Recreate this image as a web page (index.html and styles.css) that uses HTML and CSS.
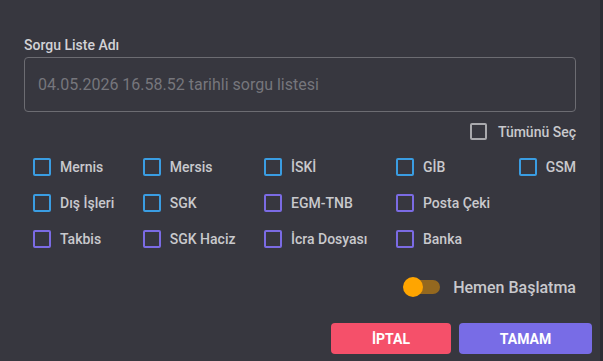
FILE: index.html
```html
<!DOCTYPE html>
<html lang="tr">
<head>
    <meta charset="UTF-8">
    <meta name="viewport" content="width=device-width, initial-scale=1.0">
    <title>Sorgu Listesi</title>
    <link rel="stylesheet" href="styles.css">
</head>
<body>
    <div class="dialog">
        <label class="field-label" for="list-name">Sorgu Liste Adı</label>
        <input type="text" id="list-name" class="text-field" placeholder="04.05.2026 16.58.52 tarihli sorgu listesi">

        <div class="select-all">
            <span class="check check-gray"></span>
            <span>Tümünü Seç</span>
        </div>

        <div class="sources">
            <div class="source"><span class="check check-blue"></span>Mernis</div>
            <div class="source"><span class="check check-blue"></span>Mersis</div>
            <div class="source"><span class="check check-blue"></span>İSKİ</div>
            <div class="source"><span class="check check-blue"></span>GİB</div>
            <div class="source"><span class="check check-blue"></span>GSM</div>

            <div class="source"><span class="check check-blue"></span>Dış İşleri</div>
            <div class="source"><span class="check check-blue"></span>SGK</div>
            <div class="source"><span class="check check-purple"></span>EGM-TNB</div>
            <div class="source"><span class="check check-purple"></span>Posta Çeki</div>
            <div class="source"></div>

            <div class="source"><span class="check check-purple"></span>Takbis</div>
            <div class="source"><span class="check check-purple"></span>SGK Haciz</div>
            <div class="source"><span class="check check-purple"></span>İcra Dosyası</div>
            <div class="source"><span class="check check-purple"></span>Banka</div>
            <div class="source"></div>
        </div>

        <div class="switch-row">
            <span class="switch"><span class="switch-track"></span><span class="switch-knob"></span></span>
            <span>Hemen Başlatma</span>
        </div>

        <div class="actions">
            <button type="button" class="btn btn-cancel">İptal</button>
            <button type="button" class="btn btn-ok">Tamam</button>
        </div>
    </div>
    <div class="scrollbar"></div>
</body>
</html>
```

FILE: styles.css
```css
html, body {
    height: 100%;
}

body {
    margin: 0;
    display: flex;
    background-color: #37373f;
    font-family: Roboto, "Liberation Sans", sans-serif;
    color: #c9c9cd;
    overflow: hidden;
}

.dialog {
    flex: 1;
    display: flex;
    flex-direction: column;
    padding: 37px 24px 0 24px;
}

.scrollbar {
    width: 3px;
    background-color: #2c2c33;
}

.field-label {
    font-size: 14px;
    font-weight: 500;
    line-height: 17px;
    color: #d2d2d6;
}

.text-field {
    margin-top: 3px;
    height: 55px;
    box-sizing: border-box;
    padding: 0 13px;
    background: transparent;
    border: 1px solid #6c6c72;
    border-radius: 4px;
    font-family: Roboto, "Liberation Sans", sans-serif;
    font-size: 16px;
    color: #c9c9cd;
}

.text-field::placeholder {
    color: #76767c;
}

.select-all {
    margin-top: 11px;
    align-self: flex-end;
    display: flex;
    align-items: center;
    gap: 11px;
    height: 17px;
    font-size: 14px;
    font-weight: 500;
}

.check {
    display: inline-block;
    width: 18px;
    height: 18px;
    box-sizing: border-box;
    border: 2px solid;
    border-radius: 2px;
    flex-shrink: 0;
}

.select-all .check {
    width: 17px;
    height: 17px;
}

.check-gray {
    border-color: #a9a9ad;
}

.check-blue {
    border-color: #3a9de2;
}

.check-purple {
    border-color: #7b6be4;
}

.sources {
    margin: 18px 0 0 9px;
    display: grid;
    grid-template-columns: repeat(5, auto);
    justify-content: space-between;
    row-gap: 18px;
}

.source {
    display: flex;
    align-items: center;
    gap: 9px;
    height: 18px;
    font-size: 14px;
    font-weight: 500;
    white-space: nowrap;
}

.switch-row {
    margin-top: 27px;
    align-self: flex-end;
    display: flex;
    align-items: center;
    gap: 13px;
    height: 24px;
    font-size: 16px;
    font-weight: 500;
}

.switch {
    position: relative;
    width: 37px;
    height: 20px;
}

.switch-track {
    position: absolute;
    left: 3px;
    right: 0;
    top: 3px;
    height: 14px;
    border-radius: 7px;
    background-color: #94681f;
}

.switch-knob {
    position: absolute;
    left: 0;
    top: 0;
    width: 20px;
    height: 20px;
    border-radius: 50%;
    background-color: #ffa500;
}

.actions {
    margin: 24px -16px 0 0;
    display: flex;
    justify-content: flex-end;
    gap: 8px;
}

.btn {
    height: 31px;
    border: none;
    border-radius: 4px;
    color: #ffffff;
    font-family: Roboto, "Liberation Sans", sans-serif;
    font-size: 14px;
    font-weight: 700;
    text-transform: uppercase;
    cursor: pointer;
}

.btn-cancel {
    width: 120px;
    background-color: #f5506a;
}

.btn-ok {
    width: 133px;
    background-color: #786ce6;
}
```
